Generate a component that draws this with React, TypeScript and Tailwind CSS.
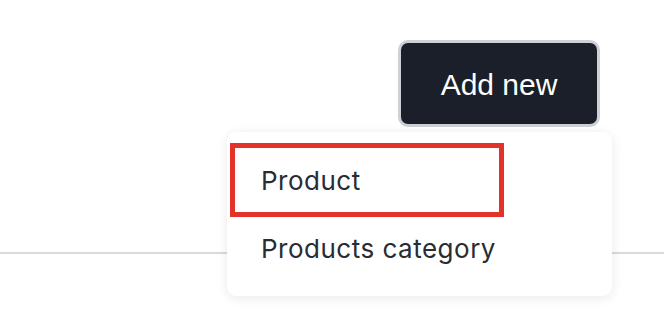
import React from 'react';

const menuItems = ['Product', 'Products category'];

const App: React.FC = () => {
  return (
    <div className="relative h-[312px] w-[664px] overflow-hidden bg-white">
      <div className="flex justify-end pr-[64px] pt-[40px]">
        <button className="flex h-[87px] w-[202px] items-center justify-center rounded-[10px] border-[3px] border-[#cdd0d5] bg-[#1b1f29] pt-[2px] text-[30px] text-white [font-family:'Liberation_Sans',Arial,sans-serif]">
          Add new
        </button>
      </div>
      <div className="h-[127px] border-b-2 border-[#dadada]" />

      <div className="absolute left-[227px] top-[132px] flex h-[164px] w-[385px] flex-col rounded-[9px] bg-white pl-[3px] pt-[11px] shadow-[0_2px_12px_rgba(0,0,0,0.09)] [font-family:Inter,'Noto_Sans',sans-serif]">
        <div className="flex h-[74px] w-[274px] items-center border-[5px] border-[#e3322a] pl-[26px] text-[26px] tracking-[0.5px] text-[#272c35]">
          {menuItems[0]}
        </div>
        <div className="flex h-[62px] items-center pl-[31px] text-[26px] tracking-[0.5px] text-[#272c35]">
          {menuItems[1]}
        </div>
      </div>
    </div>
  );
};

export default App;
